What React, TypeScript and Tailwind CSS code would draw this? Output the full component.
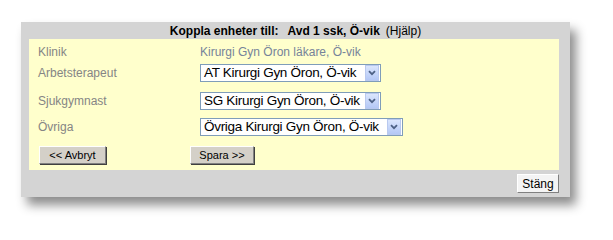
import { ReactNode } from "react";

const font = { fontFamily: '"Liberation Sans", Arial, sans-serif' };

// XP-style dropdown with the small blue arrow box
const Select = ({ value, width }: { value: string; width: string }) => (
  <div className={`flex h-[18px] items-center border border-[#7f9db9] bg-white pl-[3px] pr-px ${width}`}>
    <span className="flex-1 whitespace-nowrap text-[13.5px] leading-[16px] tracking-[-0.3px] text-black">{value}</span>
    <span className="flex h-[16px] w-[14px] shrink-0 items-center justify-center border border-[#b9c9ef] bg-gradient-to-b from-[#dbe6fd] to-[#b4c8f6]">
      <svg width="8" height="6" viewBox="0 0 8 6">
        <path d="M1 1.2 L4 4.2 L7 1.2" fill="none" stroke="#4d6185" strokeWidth="1.8" />
      </svg>
    </span>
  </div>
);

const Button = ({ children, className }: { children: ReactNode; className: string }) => (
  <button
    type="button"
    className={`flex items-center justify-center border border-t-white border-l-white border-r-[#808080] border-b-[#808080] bg-[#d4d0c8] text-[11px] leading-none text-black shadow-[1px_1px_0_#404040] ${className}`}
  >
    {children}
  </button>
);

const Row = ({ label, children, className }: { label: string; children: ReactNode; className?: string }) => (
  <div className={`flex items-center ${className ?? ""}`}>
    <div className="w-[171px] pl-[9px] text-[12px] text-[#858585]">{label}</div>
    {children}
  </div>
);

export default function App() {
  return (
    <div className="h-[239px] w-[613px] bg-white pl-[21px] pt-[22px]" style={font}>
      <div className="flex w-[549px] flex-col bg-[#d4d4d4] shadow-[6px_8px_10px_rgba(0,0,0,0.45)]">
        {/* title */}
        <div className="flex h-[17px] items-center justify-center text-[12px] leading-none text-black">
          <span className="font-bold">Koppla enheter till:</span>
          <span className="ml-[9px] font-bold">Avd 1 ssk, Ö-vik</span>
          <span className="ml-[6px]">(Hjälp)</span>
        </div>

        {/* form */}
        <div className="ml-[8px] mr-[11px] flex flex-col bg-[#ffffcc] pb-[6px]">
          <Row label="Klinik" className="h-[25px]">
            <span className="text-[12px] text-[#76839a]">Kirurgi Gyn Öron läkare, Ö-vik</span>
          </Row>
          <Row label="Arbetsterapeut">
            <Select value="AT Kirurgi Gyn Öron, Ö-vik" width="w-[181px]" />
          </Row>
          <Row label="Sjukgymnast" className="mt-[10px]">
            <Select value="SG Kirurgi Gyn Öron, Ö-vik" width="w-[181px]" />
          </Row>
          <Row label="Övriga" className="mt-[8px]">
            <Select value="Övriga Kirurgi Gyn Öron, Ö-vik" width="w-[203px]" />
          </Row>
          <div className="mt-[10px] flex items-center">
            <Button className="ml-[10px] h-[18px] w-[67px]">&lt;&lt; Avbryt</Button>
            <Button className="ml-[84px] h-[18px] w-[64px]">Spara &gt;&gt;</Button>
          </div>
        </div>

        {/* footer */}
        <div className="flex h-[27px] items-center justify-end pr-[11px]">
          <button
            type="button"
            className="h-[19px] w-[42px] border border-t-white border-l-white border-r-[#808080] border-b-[#808080] bg-[#f4f4f4] text-[12px] leading-none text-black"
          >
            Stäng
          </button>
        </div>
      </div>
    </div>
  );
}
